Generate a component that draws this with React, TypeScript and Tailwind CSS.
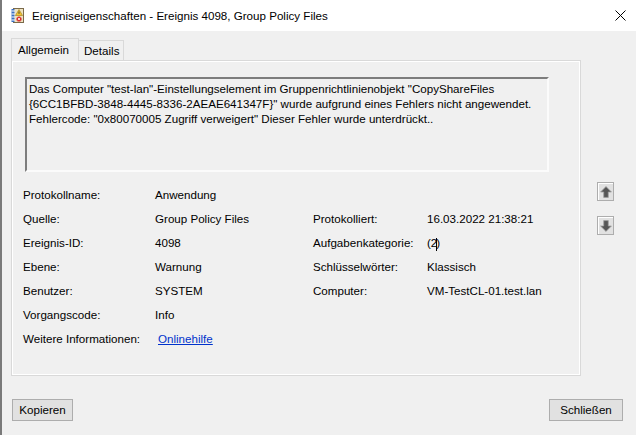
const font = { fontFamily: '"Liberation Sans", Arial, sans-serif' }

const TitleIcon = () => (
  <svg width="13" height="15" viewBox="0 0 13 15">
    <rect x="2.5" y="0.5" width="10" height="14" fill="#efe3c2" stroke="#7a6a4a" />
    <rect x="0.5" y="1" width="3" height="13" fill="#3a6fc4" />
    <line x1="0.5" y1="3" x2="4" y2="3" stroke="#fff" />
    <line x1="0.5" y1="6" x2="4" y2="6" stroke="#fff" />
    <line x1="0.5" y1="9" x2="4" y2="9" stroke="#fff" />
    <line x1="0.5" y1="12" x2="4" y2="12" stroke="#fff" />
    <path d="M8 1.5 L11.5 7.5 H4.5 Z" fill="#f4c430" stroke="#9a7a10" strokeWidth="0.6" />
    <line x1="8" y1="3.5" x2="8" y2="5.8" stroke="#333" strokeWidth="0.9" />
    <circle cx="8" cy="11" r="2.6" fill="#d83030" />
    <path d="M6.8 9.8 L9.2 12.2 M9.2 9.8 L6.8 12.2" stroke="#fff" strokeWidth="0.8" />
  </svg>
)

const Arrow = ({ down }: { down?: boolean }) => (
  <button className="w-[17px] h-[19px] border border-[#adadad] bg-[#e1e1e1] shadow-[inset_1px_1px_0_#fff] flex items-center justify-center">
    <svg width="12" height="12" viewBox="0 0 12 12" className={down ? 'rotate-180' : ''}>
      <path d="M6 0.6 L11.4 6 H8.3 V11.4 H3.7 V6 H0.6 Z" fill="#555" stroke="#a0a0a0" strokeWidth="0.8" />
    </svg>
  </button>
)

const rows: [string, React.ReactNode, string?, React.ReactNode?][] = [
  ['Protokollname:', 'Anwendung'],
  ['Quelle:', 'Group Policy Files', 'Protokolliert:', '16.03.2022 21:38:21'],
  [
    'Ereignis-ID:',
    '4098',
    'Aufgabenkategorie:',
    <span className="relative">
      (2<span className="inline-block w-px h-[13px] bg-black align-middle -mx-px" />)
    </span>,
  ],
  ['Ebene:', 'Warnung', 'Schlüsselwörter:', 'Klassisch'],
  ['Benutzer:', 'SYSTEM', 'Computer:', 'VM-TestCL-01.test.lan'],
  ['Vorgangscode:', 'Info'],
  [
    'Weitere Informationen:',
    <a className="text-[#0033cc] underline ml-[3px]" href="#">
      Onlinehilfe
    </a>,
  ],
]

export default function App() {
  return (
    <div
      style={font}
      className="w-[636px] h-[435px] bg-[#f0f0f0] border-l-2 border-[#7a7a7a] text-[11.6px] text-black flex flex-col overflow-hidden"
    >
      <div className="h-[31px] bg-white flex items-center pl-[9px] pr-[10px] shrink-0">
        <TitleIcon />
        <span className="ml-[8px] text-[11.6px]">Ereigniseigenschaften - Ereignis 4098, Group Policy Files</span>
        <svg className="ml-auto" width="11" height="11" viewBox="0 0 11 11">
          <path d="M0.5 0.5 L10.5 10.5 M10.5 0.5 L0.5 10.5" stroke="#000" strokeWidth="1" />
        </svg>
      </div>

      <div className="flex pl-[9px] pt-[7px]">
        <div className="w-[570px] flex flex-col">
          <div className="flex items-end h-[23px] -mb-px relative z-10">
            <div className="w-[68px] h-[23px] border border-b-0 border-[#d9d9d9] bg-[#f0f0f0] flex items-center pl-[6px] pb-[1px]">
              Allgemein
            </div>
            <div className="w-[45px] h-[20px] mb-px border border-l-0 border-b-0 border-[#d9d9d9] bg-[#f0f0f0] flex items-center pl-[5px]">
              Details
            </div>
          </div>
          <div className="h-[316px] border border-[#d9d9d9] shadow-[inset_1px_1px_0_#fff,inset_-1px_-1px_0_#fff] pt-[16px] pl-[13px]">
            <div className="w-[524px] h-[95px] border-2 border-t-[#7d7d7d] border-l-[#7d7d7d] border-r-[#fbfbfb] border-b-[#fbfbfb] pl-[2px] pt-[2px] leading-[15px] whitespace-nowrap overflow-hidden">
              Das Computer "test-lan"-Einstellungselement im Gruppenrichtlinienobjekt "CopyShareFiles
              <br />
              {'{6CC1BFBD-3848-4445-8336-2AEAE641347F}" wurde aufgrund eines Fehlers nicht angewendet.'}
              <br />
              Fehlercode: "0x80070005 Zugriff verweigert" Dieser Fehler wurde unterdrückt..
            </div>
            <div className="grid grid-cols-[132px_158px_114px_1fr] mt-[11px] -ml-[2px]">
              {rows.map(([a, b, c, d], i) => (
                <div key={i} className="contents">
                  <div className="h-[24px] flex items-center">{a}</div>
                  <div className="h-[24px] flex items-center">{b}</div>
                  <div className="h-[24px] flex items-center">{c}</div>
                  <div className="h-[24px] flex items-center">{d}</div>
                </div>
              ))}
            </div>
          </div>
        </div>
        <div className="flex flex-col gap-[15px] ml-[16px] mt-[144px]">
          <Arrow />
          <Arrow down />
        </div>
      </div>

      <div className="flex justify-between pl-[10px] pr-[13px] mt-[23px]">
        <button className="w-[61px] h-[22px] border border-[#adadad] bg-[#e1e1e1]">Kopieren</button>
        <button className="w-[74px] h-[22px] border border-[#adadad] bg-[#e1e1e1]">Schließen</button>
      </div>
    </div>
  )
}
